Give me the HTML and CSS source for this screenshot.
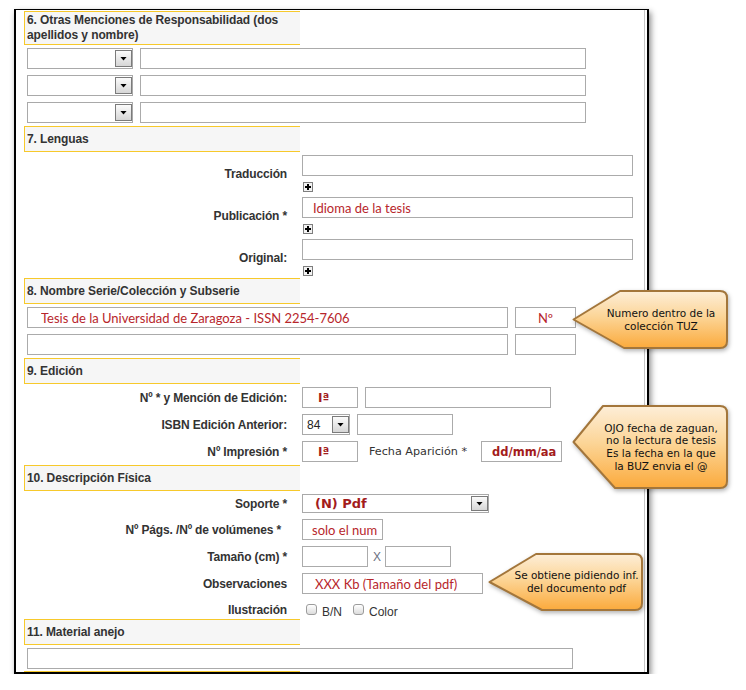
FILE: index.html
```html
<!DOCTYPE html>
<html lang="es">
<head>
<meta charset="utf-8">
<title>Formulario de catalogación</title>
<link rel="stylesheet" href="styles.css">
</head>
<body>
<div class="frame">
  <div class="viewport">

    <section class="sec">
      <h3 class="sec-head">6. Otras Menciones de Responsabilidad (dos apellidos y nombre)</h3>
      <div class="sec-body">
        <div class="pair">
          <div class="select select--role"><span class="sel-val"></span><span class="sel-btn"></span></div>
          <input class="txt txt--name" type="text">
        </div>
        <div class="pair">
          <div class="select select--role"><span class="sel-val"></span><span class="sel-btn"></span></div>
          <input class="txt txt--name" type="text">
        </div>
        <div class="pair">
          <div class="select select--role"><span class="sel-val"></span><span class="sel-btn"></span></div>
          <input class="txt txt--name" type="text">
        </div>
      </div>
    </section>

    <section class="sec">
      <h3 class="sec-head">7. Lenguas</h3>
      <div class="sec-body sec-body--grid sec-body--lang">
        <div class="row">
          <label class="lbl">Traducción</label>
          <div class="field field--stack">
            <input class="txt txt--lang" type="text">
            <span class="add"><svg width="10" height="10" viewBox="0 0 10 10"><rect x=".5" y=".5" width="9" height="9" fill="#f2f2f2" stroke="#7e7e7e"/><path d="M5 2v6M2 5h6" stroke="#000" stroke-width="2"/></svg></span>
          </div>
        </div>
        <div class="row">
          <label class="lbl">Publicación *</label>
          <div class="field field--stack">
            <input class="txt txt--lang" type="text" value="Idioma de la tesis">
            <span class="add"><svg width="10" height="10" viewBox="0 0 10 10"><rect x=".5" y=".5" width="9" height="9" fill="#f2f2f2" stroke="#7e7e7e"/><path d="M5 2v6M2 5h6" stroke="#000" stroke-width="2"/></svg></span>
          </div>
        </div>
        <div class="row">
          <label class="lbl">Original:</label>
          <div class="field field--stack">
            <input class="txt txt--lang" type="text">
            <span class="add"><svg width="10" height="10" viewBox="0 0 10 10"><rect x=".5" y=".5" width="9" height="9" fill="#f2f2f2" stroke="#7e7e7e"/><path d="M5 2v6M2 5h6" stroke="#000" stroke-width="2"/></svg></span>
          </div>
        </div>
      </div>
    </section>

    <section class="sec">
      <h3 class="sec-head">8. Nombre Serie/Colección y Subserie</h3>
      <div class="sec-body">
        <div class="pair">
          <input class="txt txt--serie" type="text" value="Tesis de la Universidad de Zaragoza - ISSN 2254-7606">
          <input class="txt txt--num" type="text" value="Nº">
        </div>
        <div class="pair">
          <input class="txt txt--serie" type="text">
          <input class="txt txt--num" type="text">
        </div>
      </div>
    </section>

    <section class="sec">
      <h3 class="sec-head">9. Edición</h3>
      <div class="sec-body sec-body--grid">
        <div class="row">
          <label class="lbl">Nº * y Mención de Edición:</label>
          <div class="field">
            <input class="txt txt--ed val-strong" type="text" value="Iª">
            <input class="txt txt--mencion" type="text">
          </div>
        </div>
        <div class="row">
          <label class="lbl">ISBN Edición Anterior:</label>
          <div class="field">
            <div class="select select--isbn"><span class="sel-val">84</span><span class="sel-btn"></span></div>
            <input class="txt txt--isbn" type="text">
          </div>
        </div>
        <div class="row">
          <label class="lbl">Nº Impresión *</label>
          <div class="field">
            <input class="txt txt--ed val-strong" type="text" value="Iª">
            <span class="inline-label">Fecha Aparición *</span>
            <input class="txt txt--fecha val-strong" type="text" value="dd/mm/aa">
          </div>
        </div>
      </div>
    </section>

    <section class="sec">
      <h3 class="sec-head">10. Descripción Física</h3>
      <div class="sec-body sec-body--grid">
        <div class="row">
          <label class="lbl">Soporte *</label>
          <div class="field">
            <div class="select select--soporte"><span class="sel-val sel-val--strong">(N) Pdf</span><span class="sel-btn"></span></div>
          </div>
        </div>
        <div class="row">
          <label class="lbl lbl--indent">Nº Págs. /Nº de volúmenes *</label>
          <div class="field">
            <input class="txt txt--pags" type="text" value="solo el num">
          </div>
        </div>
        <div class="row">
          <label class="lbl">Tamaño (cm) *</label>
          <div class="field">
            <input class="txt txt--dim" type="text">
            <span class="sep">X</span>
            <input class="txt txt--dim" type="text">
          </div>
        </div>
        <div class="row">
          <label class="lbl">Observaciones</label>
          <div class="field">
            <input class="txt txt--obs" type="text" value="XXX Kb (Tamaño del pdf)">
          </div>
        </div>
        <div class="row row--check">
          <label class="lbl">Ilustración</label>
          <div class="field">
            <span class="chk"></span><span class="chk-label">B/N</span>
            <span class="chk"></span><span class="chk-label">Color</span>
          </div>
        </div>
      </div>
    </section>

    <section class="sec">
      <h3 class="sec-head">11. Material anejo</h3>
      <div class="sec-body sec-body--last">
        <input class="txt txt--anejo" type="text">
      </div>
    </section>

    <div class="sec-head sec-head--cut"></div>
  </div>
</div>

<div class="callout callout--tuz">
  <svg class="callout-shape" width="156" height="59" viewBox="0 0 156 59">
    <defs><linearGradient id="cg1" x1="0" y1="0" x2="0" y2="1"><stop offset="0" stop-color="#fdeed8"/><stop offset=".45" stop-color="#fcd597"/><stop offset="1" stop-color="#fbaa3c"/></linearGradient></defs>
    <path d="M1.5 29.5 L48 1 H148 Q155 1 155 8 V51 Q155 58 148 58 H52 Z" fill="url(#cg1)" stroke="#a3763b" stroke-width="2" stroke-linejoin="round"/>
  </svg>
  <p class="callout-text">Numero dentro de la<br>colección TUZ</p>
</div>

<div class="callout callout--fecha">
  <svg class="callout-shape" width="156" height="84" viewBox="0 0 156 84">
    <defs><linearGradient id="cg2" x1="0" y1="0" x2="0" y2="1"><stop offset="0" stop-color="#fdeed8"/><stop offset=".45" stop-color="#fcd597"/><stop offset="1" stop-color="#fbaa3c"/></linearGradient></defs>
    <path d="M1.5 37 L31 1 H148 Q155 1 155 8 V76 Q155 83 148 83 H43 Z" fill="url(#cg2)" stroke="#a3763b" stroke-width="2" stroke-linejoin="round"/>
  </svg>
  <p class="callout-text">OJO fecha de zaguan,<br>no la lectura de tesis<br>Es la fecha en la que<br>la BUZ envia el @</p>
</div>

<div class="callout callout--pdf">
  <svg class="callout-shape" width="155" height="58" viewBox="0 0 155 58">
    <defs><linearGradient id="cg3" x1="0" y1="0" x2="0" y2="1"><stop offset="0" stop-color="#fdeed8"/><stop offset=".45" stop-color="#fcd597"/><stop offset="1" stop-color="#fbaa3c"/></linearGradient></defs>
    <path d="M1.5 29 L48 1 H147 Q154 1 154 8 V50 Q154 57 147 57 H54 Z" fill="url(#cg3)" stroke="#a3763b" stroke-width="2" stroke-linejoin="round"/>
  </svg>
  <p class="callout-text">Se obtiene pidiendo inf.<br>del documento pdf</p>
</div>
</body>
</html>
```

FILE: styles.css
```css
* { box-sizing: border-box; margin: 0; padding: 0; }

html, body { background: #fff; }

body {
  font-family: "Liberation Sans", Arial, sans-serif;
  font-size: 12px;
  color: #333;
}

.frame {
  margin: 9px 0 0 14px;
  width: 635px;
  height: 665px;
  border: 2px solid #000;
  border-top-width: 1px;
  background: #fff;
  box-shadow: 2px 3px 6px rgba(0, 0, 0, 0.45);
}

.viewport {
  width: 629px;
  height: 662px;
  overflow: hidden;
  border-right: 1px solid #c6c6c6;
  padding: 1px 0 0 8px;
}

.sec-head {
  width: 276px;
  min-height: 26px;
  padding: 1px 2px;
  display: flex;
  align-items: center;
  border: 1px solid #f7c92b;
  border-right: 0;
  background: #f6f6f6;
  font-size: 12px;
  font-weight: bold;
  line-height: 15px;
  color: #333;
  letter-spacing: -0.1px;
}

.sec-body {
  display: flex;
  flex-direction: column;
  gap: 6px;
  padding: 3px 0 3px 3px;
}

.sec-body--grid { padding-left: 0; }
.sec-body--lang { gap: 5px; padding-bottom: 2px; }
.sec-body--last { padding-bottom: 2px; }

.pair {
  display: flex;
  align-items: center;
  gap: 7px;
}

.row {
  display: grid;
  grid-template-columns: 263px auto;
  column-gap: 15px;
  align-items: center;
}

.row--check { height: 16px; }

.lbl {
  text-align: right;
  font-weight: bold;
  font-size: 12px;
  line-height: 14px;
  color: #333;
  letter-spacing: -0.15px;
}

.lbl--indent { padding-right: 6px; }

.field {
  display: flex;
  align-items: center;
  gap: 7px;
}

.field--stack {
  flex-direction: column;
  align-items: flex-start;
  gap: 6px;
}

.add {
  display: block;
  width: 10px;
  height: 10px;
  margin-left: 1px;
}

.add svg { display: block; }

.txt {
  display: block;
  -webkit-appearance: none;
  appearance: none;
  height: 21px;
  border: 1px solid #ababab;
  border-radius: 0;
  background: #fff;
  font-family: Lato, "Open Sans", sans-serif;
  font-size: 13px;
  color: #b7262b;
  padding: 0 0 0 10px;
  outline: none;
}

.val-strong {
  font-family: "DejaVu Sans", Verdana, sans-serif;
  font-weight: bold;
  color: #a31c1c;
}

.txt--name { width: 446px; }
.txt--lang { width: 331px; }
.txt--serie { width: 481px; padding-left: 13px; }
.txt--num { width: 61px; padding: 0; text-align: center; }
.txt--ed { width: 56px; padding-left: 15px; font-size: 12px; }
.txt--mencion { width: 186px; }
.txt--isbn { width: 96px; }
.txt--fecha { width: 81px; font-size: 11.5px; padding-left: 10px; }
.txt--pags { width: 81px; padding-left: 9px; }
.txt--dim { width: 66px; }
.txt--obs { width: 181px; padding-left: 12px; }
.txt--anejo { width: 546px; }

.inline-label {
  font-family: "DejaVu Sans", Verdana, sans-serif;
  font-size: 11.2px;
  color: #333;
  margin: 0 7px 0 4px;
  white-space: nowrap;
}

.sep {
  color: #6b7182;
  font-size: 12px;
  margin: 0 -3px 0 -2px;
}

.select {
  display: flex;
  align-items: center;
  height: 21px;
  border: 1px solid #a9a9a9;
  background: #fff;
  padding-left: 4px;
}

.select--role { width: 106px; }
.select--isbn { width: 48px; }
.select--soporte { width: 187px; height: 19px; padding-left: 12px; }

.sel-val {
  flex: 1;
  font-size: 12px;
  color: #222;
  white-space: nowrap;
  overflow: hidden;
}

.sel-val--strong {
  font-family: "DejaVu Sans", Verdana, sans-serif;
  font-weight: bold;
  font-size: 13px;
  color: #a31c1c;
}

.sel-btn {
  flex: none;
  width: 17px;
  height: calc(100% - 2px);
  border: 1px solid #7b7b7b;
  background: linear-gradient(#fbfbfb, #d6d6d6);
  display: flex;
  align-items: center;
  justify-content: center;
}

.sel-btn::after {
  content: "";
  width: 7px;
  height: 4px;
  background: #000;
  clip-path: polygon(0 0, 100% 0, 50% 100%);
}

.chk {
  display: block;
  width: 11px;
  height: 11px;
  border: 1px solid #9c9c9c;
  border-radius: 3px;
  background: linear-gradient(#ffffff, #dcdcdc);
  margin: 0 -2px 0 4px;
}

.chk-label {
  font-size: 12px;
  color: #333;
  margin-top: 5px;
}

.sec-head--cut { min-height: 26px; }

/* callouts */
.callout {
  position: absolute;
  display: flex;
  align-items: center;
  justify-content: center;
  padding-left: 22px;
}

.callout--tuz { left: 572px; top: 290px; width: 156px; height: 59px; }
.callout--fecha { left: 572px; top: 405px; width: 156px; height: 84px; }
.callout--pdf { left: 488px; top: 553px; width: 155px; height: 58px; }

.callout-shape {
  position: absolute;
  left: 0;
  top: 0;
  overflow: visible;
  filter: drop-shadow(1px 2px 2px rgba(0, 0, 0, 0.3));
}

.callout-text {
  position: relative;
  font-family: "DejaVu Sans", Verdana, sans-serif;
  font-size: 10.5px;
  line-height: 12.7px;
  color: #111;
  text-align: center;
  white-space: nowrap;
}
```
